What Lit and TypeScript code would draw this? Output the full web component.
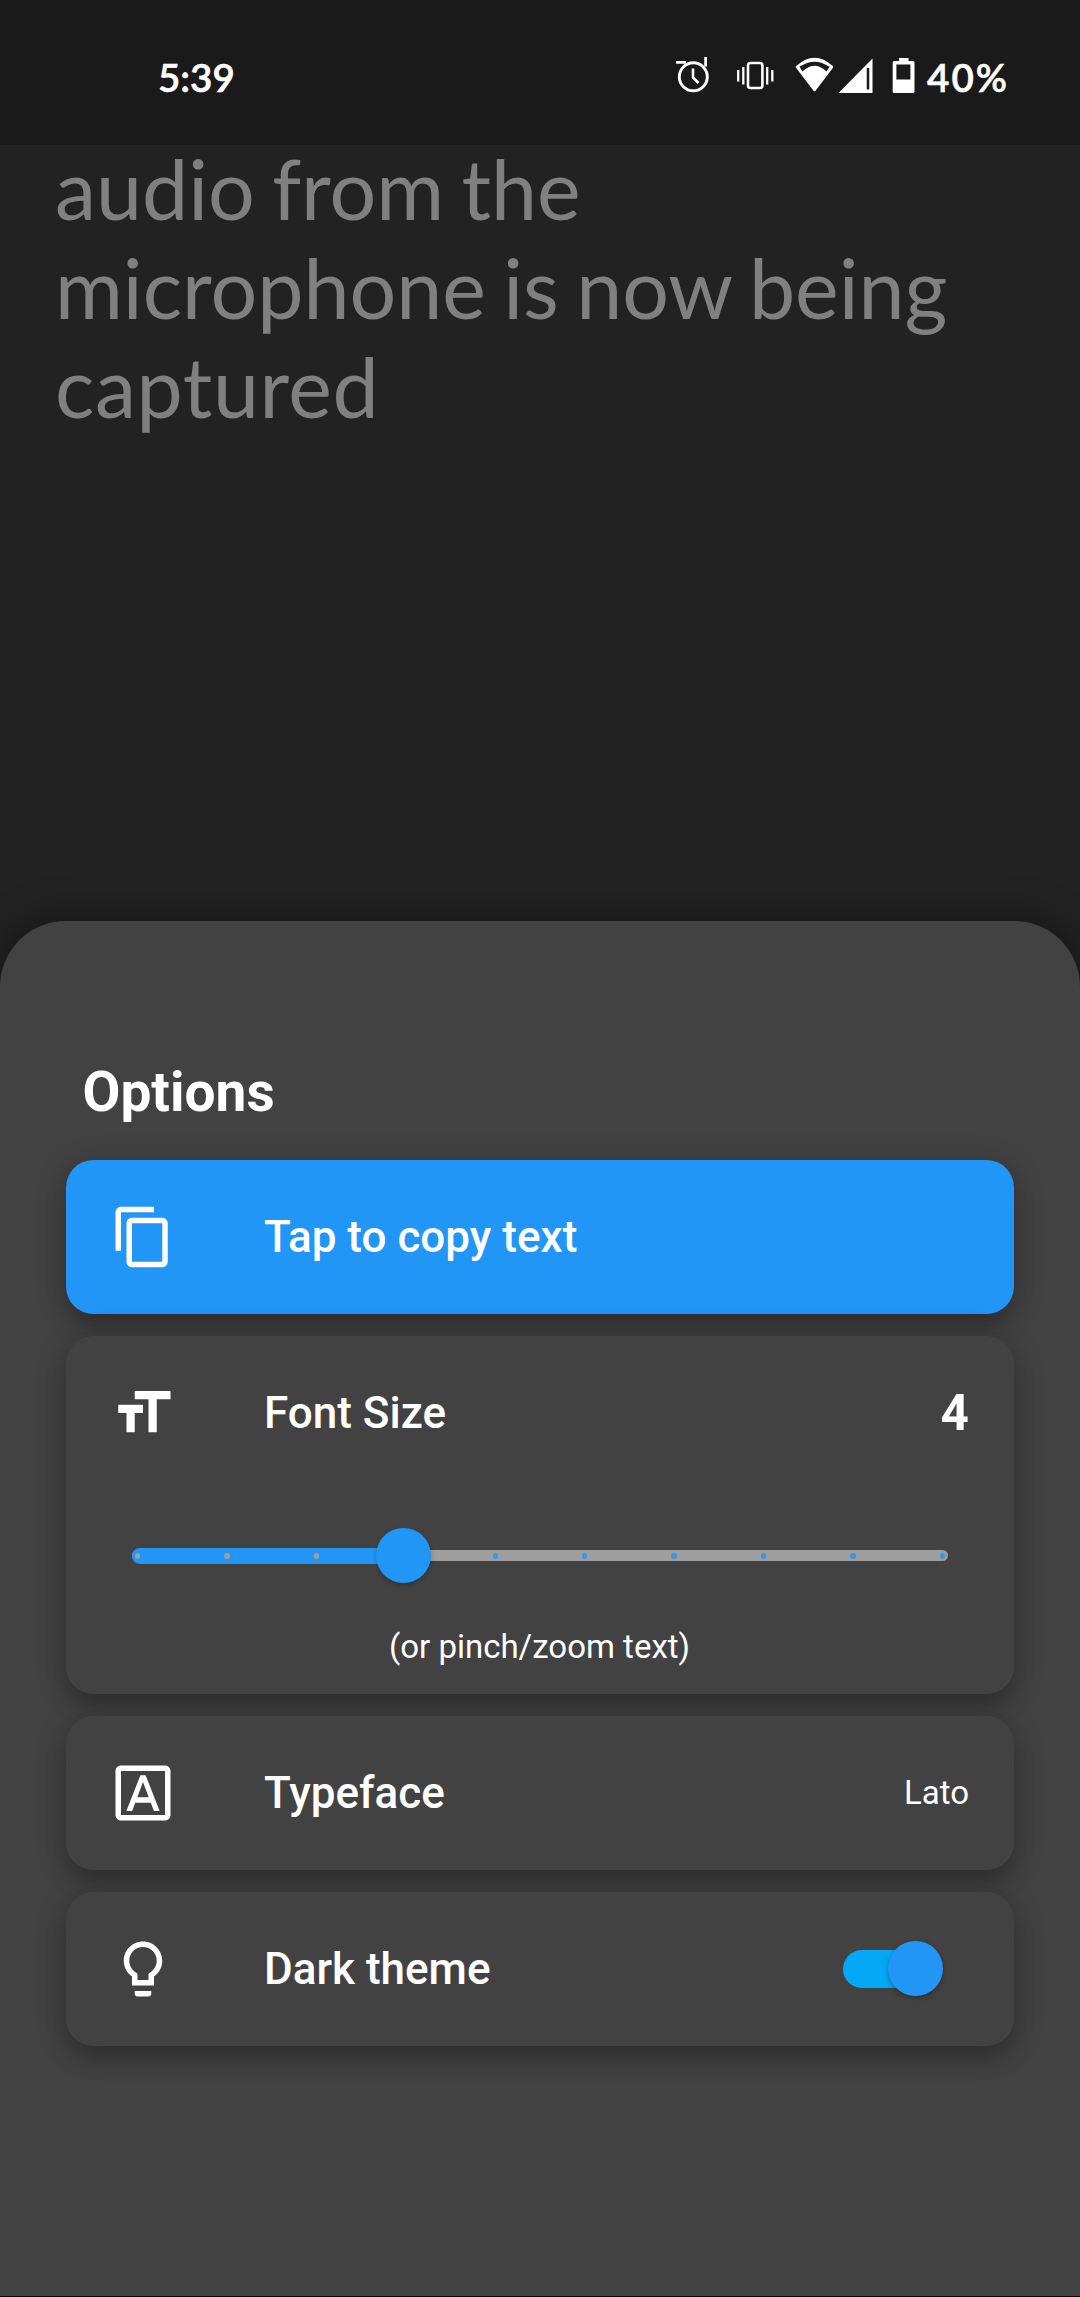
import { LitElement, html, css, svg } from "lit";
import { customElement, property } from "lit/decorators.js";

const ICONS = {
  copy: svg`<path d="M16 1H4c-1.1 0-2 .9-2 2v14h2V3h12V1zm3 4H8c-1.1 0-2 .9-2 2v14c0 1.1.9 2 2 2h11c1.1 0 2-.9 2-2V7c0-1.1-.9-2-2-2zm0 16H8V7h11v14z"/>`,
  size: svg`<path d="M9 4v3h5v12h3V7h5V4H9zm-6 8h3v7h3v-7h3V9H3v3z"/>`,
  typeface: svg`<path d="M20 2H4c-1.1 0-2 .9-2 2v16c0 1.1.9 2 2 2h16c1.1 0 2-.9 2-2V4c0-1.1-.9-2-2-2zm0 18H4V4h16v16z"/><path d="M8.05 18.5l1.14-3h5.64l1.14 3h2.09L12.93 5.5h-1.86L5.96 18.5zM12 7.98l2.07 5.52H9.93z"/>`,
  bulb: svg`<path d="M9 21c0 .55.45 1 1 1h4c.55 0 1-.45 1-1v-1H9v1zm3-19C8.14 2 5 5.14 5 9c0 2.38 1.19 4.47 3 5.74V18h8v-3.26c1.81-1.27 3-3.36 3-5.74 0-3.86-3.14-7-7-7zm2.85 11.1l-.85.6V16h-4v-2.3l-.85-.6C7.8 12.16 7 10.63 7 9c0-2.76 2.24-5 5-5s5 2.24 5 5c0 1.63-.8 3.16-2.15 4.1z"/>`,
};

@customElement("status-bar")
class StatusBar extends LitElement {
  static styles = css`
    :host {
      display: flex;
      box-sizing: border-box;
      height: 145px;
      padding: 45px 72px 0 158px;
      justify-content: space-between;
      background: #1a1a1a;
      color: #fff;
      font: 600 38.5px/64px Lato, sans-serif;
      -webkit-text-stroke: 0.6px #fff;
    }
    .right { display: flex; }
    .icons { display: block; width: 246px; height: 64px; }
    .level { width: 93px; text-align: right; letter-spacing: 2px; margin-right: -1px; }
  `;
  render() {
    return html`
      <span class="time">5:39</span>
      <div class="right">
        <svg class="icons" viewBox="670 45 246 64" fill="none" stroke="#fff">
          <circle cx="693.3" cy="76.8" r="14" stroke-width="2.900" />
          <path d="M693 68.500v9l5.500 5.500" stroke-width="2.600" />
          <path d="M676 62.300h10M705.600 57v9.500" stroke-width="2.700" />
          <rect x="748" y="63" width="14.400" height="25" rx="2.500" stroke-width="2.600" />
          <path d="M738.200 70v11.500M743.300 67v17.500M767.200 67v17.500M772.300 70v11.500" stroke-width="2.300" />
          <path d="M797 67Q814.500 51 832 67L814.500 90Z" fill="#fff" stroke-width="2.500" stroke-linejoin="round" />
          <path d="M799.500 66.800Q814.500 56.500 829.500 66.800L826.500 71.500Q814.500 60 802.500 71.500Z" fill="#1a1a1a" stroke="none" />
          <path d="M838.500 93L872.500 58.500V93Z" fill="#fff" stroke="none" />
          <path d="M868 68V89.500" stroke="#1a1a1a" stroke-width="2.500" />
          <path d="M894 61h5v-3h9.500v3h4.500q1.500 0 1.500 1.500v29q0 1.500-1.500 1.500h-18.800q-1.500 0-1.500-1.500v-29q0-1.500 1.500-1.500z" fill="#fff" stroke="none" />
          <rect x="896.400" y="64.500" width="14" height="15" fill="#1a1a1a" stroke="none" />
        </svg>
        <span class="level">40%</span>
      </div>
    `;
  }
}

@customElement("option-row")
class OptionRow extends LitElement {
  @property() icon: keyof typeof ICONS = "copy";
  @property() label = "";
  static styles = css`
    :host {
      display: flex;
      align-items: center;
      box-sizing: border-box;
      height: 154px;
      padding: 0 45px 0 44px;
    }
    .icon { width: 66px; height: 66px; margin-right: 88px; fill: #fff; }
    .label { flex: 1; font-size: 44px; font-weight: 500; }
  `;
  render() {
    return html`
      <svg class="icon" viewBox="0 0 24 24">${ICONS[this.icon]}</svg>
      <span class="label">${this.label}</span>
      <slot></slot>
    `;
  }
}

@customElement("step-slider")
class StepSlider extends LitElement {
  @property({ type: Number }) value = 4;
  @property({ type: Number }) steps = 10;
  static styles = css`
    :host { display: block; height: 55px; margin: 0 66px; }
    .rail { position: relative; height: 55px; display: flex; align-items: center; }
    .base { width: 100%; height: 11px; border-radius: 6px; background: #9e9e9e; }
    .fill, .thumb, .ticks { position: absolute; }
    .fill { left: 0; top: 19.25px; height: 16.5px; border-radius: 8.25px 0 0 8.25px; background: #2196f6; }
    .ticks { left: 2.75px; right: 2.75px; top: 0; bottom: 0; display: flex; align-items: center; justify-content: space-between; }
    .tick { width: 5.5px; height: 5.5px; border-radius: 50%; background: #2196f3; opacity: 0.8; }
    .tick.on { background: #9e9e9e; opacity: 1; }
    .thumb { width: 55px; height: 55px; margin-left: -27.5px; border-radius: 50%; background: #2196f6; box-shadow: 0 2px 4px rgba(0, 0, 0, 0.25); }
  `;
  render() {
    const pct = ((this.value - 1) / (this.steps - 1)) * 100;
    return html`
      <div class="rail">
        <div class="base"></div>
        <div class="fill" style="width:${pct}%"></div>
        <div class="ticks">
          ${Array.from({ length: this.steps }, (_, i) => html`<i class="tick ${i < this.value ? "on" : ""}"></i>`)}
        </div>
        <div class="thumb" style="left:${pct}%"></div>
      </div>
    `;
  }
}

@customElement("app-root")
class AppRoot extends LitElement {
  static styles = css`
    :host {
      display: flex;
      flex-direction: column;
      box-sizing: border-box;
      height: 2297px;
      background: #222;
      color: #fff;
      font-family: Roboto, sans-serif;
      border-bottom: 1px solid #050505;
    }
    .transcript { box-sizing: border-box; height: 782px; margin-top: -6px; padding: 0 55px; flex: none; color: #808080; font: 400 82.5px/99px Lato, sans-serif; word-spacing: -3.7px; }
    .last { letter-spacing: 0.55px; }
    .sheet {
      flex: 1;
      display: flex;
      flex-direction: column;
      gap: 22px;
      padding: 139.3px 66px 0;
      border-radius: 66px 66px 0 0;
      background: #424242;
      box-shadow: 0 0 44px rgba(0, 0, 0, 0.4);
    }
    .title { margin: 0 0 13px 16.5px; font-size: 55px; line-height: 65px; font-weight: 700; }
    .card {
      border-radius: 27.5px;
      background: #424242;
      box-shadow: 0 14px 22px -2px rgba(0, 0, 0, 0.22), 0 5px 32px rgba(0, 0, 0, 0.17);
    }
    .card.primary { background: #2196f6; }
    .card.size { height: 357.5px; }
    .step { font-size: 49.5px; font-weight: 700; }
    .slider { margin-top: 38px; }
    .hint { margin-top: 44px; padding-right: 1px; text-align: center; font-size: 33px; line-height: 39px; }
    .face { font-size: 33px; }
    .switch { width: 99px; height: 55px; margin-right: 27px; display: flex; align-items: center; }
    .track { position: relative; width: 91px; height: 38.5px; border-radius: 20px; background: #03a9f4; }
    .knob { position: absolute; left: 44.5px; top: -8.25px; width: 55px; height: 55px; border-radius: 50%; background: #2196f6; box-shadow: 0 2px 5px rgba(0, 0, 0, 0.3); }
  `;
  render() {
    return html`
      <status-bar></status-bar>
      <div class="transcript">audio from the microphone is now being <span class="last">captured</span></div>
      <div class="sheet">
        <div class="title">Options</div>
        <div class="card primary"><option-row icon="copy" label="Tap to copy text"></option-row></div>
        <div class="card size">
          <option-row icon="size" label="Font Size"><span class="step">4</span></option-row>
          <step-slider class="slider" value="4" steps="10"></step-slider>
          <div class="hint">(or pinch/zoom text)</div>
        </div>
        <div class="card"><option-row icon="typeface" label="Typeface"><span class="face">Lato</span></option-row></div>
        <div class="card">
          <option-row icon="bulb" label="Dark theme">
            <div class="switch"><div class="track"><div class="knob"></div></div></div>
          </option-row>
        </div>
      </div>
    `;
  }
}
